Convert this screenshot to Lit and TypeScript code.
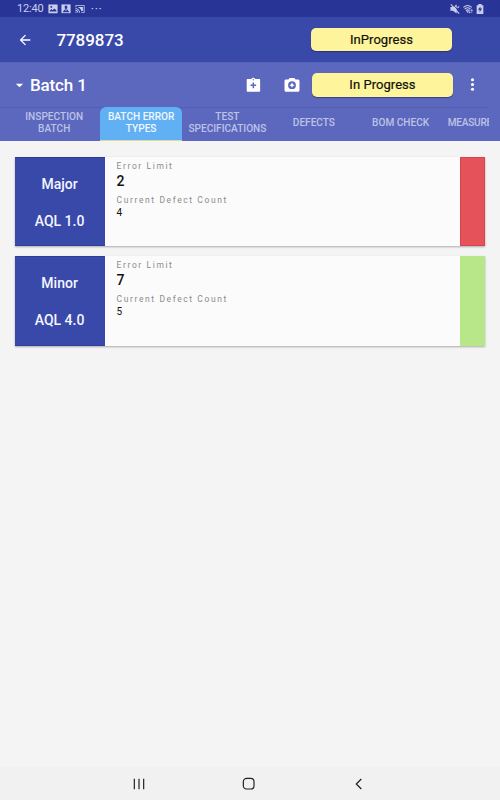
import { LitElement, html, css, svg } from "lit";
import { customElement, property } from "lit/decorators.js";
import { classMap } from "lit/directives/class-map.js";

const ICONS: Record<string, unknown> = {
  back: svg`<path d="M20 11H7.830l5.590-5.590L12 4l-8 8 8 8 1.410-1.410L7.830 13H20z"/>`,
  caret: svg`<path d="M4 8h16L12 15.800z"/>`,
  image: svg`<path fill-rule="evenodd" d="M1 1h22v21H1zM4 18h16v-3l-5-4-4 4-3-3-4 4zM6 5v4h4V5z"/>`,
  user: svg`<path d="M1 1h22v21H1z"/><path d="M9 4h6v7H9zM10.500 10h3v4h-3zM4 20l4-6h8l4 6z" fill="#293596"/><path d="M10 14h4l-2 4z"/>`,
  cast: svg`<path d="M1 3h22v18h-8v-2h6V5H3v3H1zM1 18c2 0 3 1 3 3H1zM1 14c4 0 7 3 7 7H6c0-3-2-5-5-5zM1 10c6 0 11 5 11 11h-2c0-5-4-9-9-9zM7 7h12v10h-4C14 12 11 9 7 8z"/>`,
  mute: svg`<path d="M1 7v9h6l9 7V1L7 7z"/><path d="M6 1 24 19" fill="none" stroke="#293596" stroke-width="2"/><path d="M2 1 22 23M18 9l4-3" fill="none" stroke="currentColor" stroke-width="2.500"/>`,
  wifi: svg`<path d="M1 8Q11-1 21 8M4 12q7-6 14 0M7 16q4-4 8 0" fill="none" stroke="currentColor" stroke-width="2.500"/><path d="M9 18h4l-2 3zM16 13v8m-2-2 2 3 2-3m3 3v-8m-2 2 2-3 2 3" stroke="currentColor" stroke-width="1.300"/>`,
  battery: svg`<path fill-rule="evenodd" d="M8 0h8v3h4v21H4V3h4zM13 6l-6 8h4v6l6-9h-4z"/>`,
  clipboard: svg`<path fill-rule="evenodd" d="M21 3h-6.180C14.400 1.840 13.300 1 12 1s-2.400.84-2.820 2H3.500C3 3 2.500 3.500 2.500 4v16.500c0 .5.500 1 1 1H21c.500 0 1-.5 1-1V4c0-.5-.5-1-1-1zm-9 0c.55 0 1 .45 1 1s-.45 1-1 1-1-.45-1-1 .45-1 1-1zm-1 5h2.200v3h3v2.200h-3v3H11v-3H8V11h3z"/>`,
  camera: svg`<path fill-rule="evenodd" d="M9 2.500 7.170 4.500H4c-1.100 0-2 .9-2 2V19c0 1.100.9 2 2 2h16c1.100 0 2-.9 2-2V6.500c0-1.100-.9-2-2-2h-3.170L15 2.500zm3 4.500a5.200 5.200 0 1 1 0 10.400A5.200 5.200 0 0 1 12 7z"/><path d="m12 8.700 1.200 2.300 2.300 1.200-2.300 1.200-1.200 2.300-1.200-2.300-2.300-1.200 2.300-1.200z"/>`,
  more: svg`<circle cx="12" cy="5.300" r="2.200"/><circle cx="12" cy="12" r="2.200"/><circle cx="12" cy="18.700" r="2.200"/>`,
  recents: svg`<path d="M5 4v16M12 4v16M19 4v16" fill="none" stroke="currentColor" stroke-width="1.800"/>`,
  home: svg`<rect x="3.500" y="3.500" width="16" height="16" rx="5" fill="none" stroke="currentColor" stroke-width="1.800"/>`,
  navback: svg`<path d="M15.500 4.500 8 12l7.500 7.500" fill="none" stroke="currentColor" stroke-width="1.900"/>`,
};

@customElement("ui-icon")
class UiIcon extends LitElement {
  @property() name = "";
  static styles = css`
    :host { display: block; flex: none; width: 16px; height: 16px; }
    svg { display: block; width: 100%; height: 100%; fill: currentColor; }
  `;
  render() {
    return html`<svg viewBox="0 0 24 24">${ICONS[this.name]}</svg>`;
  }
}

@customElement("error-card")
class ErrorCard extends LitElement {
  @property() kind = "";
  @property() aql = "";
  @property() limit = "";
  @property() count = "";
  @property({ type: Boolean }) failed = false;
  static styles = css`
    :host {
      display: grid; grid-template-columns: 90px 1fr 25px; height: 89.500px;
      background: #fbfbfb; box-shadow: 0 1px 2px #0000004d;
    }
    .kind {
      display: flex; flex-direction: column; align-items: center; box-sizing: border-box;
      padding-top: 17px; gap: 19px; background: #3849aa; color: #f4f5ff;
      font-size: 14px; line-height: 18px; font-weight: 500;
      border-bottom: 1px solid #2c3c9f; border-top: 1px solid #2c3c9f;
    }
    .info { padding: 3px 12px; color: #111; }
    .label { font-size: 8.500px; line-height: 12px; letter-spacing: 1.600px; color: #8b8b8b; }
    .limit { font-size: 14px; line-height: 18px; font-weight: 500; margin-bottom: 4px; }
    .count { font-size: 10px; line-height: 14px; }
    .flag { background: #b8e78a; }
    .failed { background: #e55259; box-shadow: inset 0 0 0 1px #d8434d; }
  `;
  render() {
    return html`
      <div class="kind"><span>${this.kind}</span><span>${this.aql}</span></div>
      <div class="info">
        <div class="label">Error Limit</div>
        <div class="limit">${this.limit}</div>
        <div class="label">Current Defect Count</div>
        <div class="count">${this.count}</div>
      </div>
      <div class=${classMap({ flag: true, failed: this.failed })}></div>
    `;
  }
}

@customElement("app-root")
class AppRoot extends LitElement {
  static styles = css`
    :host {
      display: grid; grid-template-rows: 17px 45px 45px 33.500px 1fr 33px;
      width: 500px; height: 800px; overflow: hidden; background: #f4f4f4;
      font-family: Roboto, sans-serif;
    }
    .status, .bar, .nav { display: flex; align-items: center; box-sizing: border-box; }
    .status { background: #293596; color: #c9ceee; padding: 0 15px 0 17px; font-size: 11px; }
    .time { width: 30.500px; line-height: 17px; letter-spacing: -0.200px; }
    .status ui-icon { width: 10px; height: 10px; }
    .status .left { margin-right: 3.500px; }
    .dots { margin-left: 3px; letter-spacing: 1.200px; line-height: 10px; font-size: 9px; font-weight: 700; }
    .right { display: flex; gap: 2.500px; margin-left: auto; }
    .bar { color: #fff; font-weight: 500; }
    .app { background: #3849aa; padding-left: 17.400px; }
    .batch { background: #5c68bd; padding-left: 14px; border-top: 1px solid #5763b8; }
    .order { width: 255px; margin-left: 23px; font-size: 17px; letter-spacing: -0.050px; }
    .caret { width: 11px; height: 11px; }
    .name { width: 214.500px; margin-left: 5px; font-size: 17px; letter-spacing: -0.150px; }
    .clip { width: 16.500px; height: 16.500px; }
    .cam { width: 18px; height: 18px; margin-left: 22.300px; }
    .pill {
      width: 141px; height: 23.500px; border-radius: 5px; background: #fef49c; color: #11110b;
      box-shadow: 0 1px 1px #1c276699; text-align: center; font-size: 13px; line-height: 24px;
      font-weight: 400; letter-spacing: 0.050px; -webkit-text-stroke: 0.200px #11110b;
    }
    .app .pill { margin-left: -0.400px; }
    .batch .pill { margin-left: 10.700px; }
    .menu { margin-left: 11px; width: 17px; height: 17px; margin-bottom: 1px; }
    .tabs {
      display: grid; grid-template-columns: 92.400px 81.500px 91px 82px 91.500px 42.600px; padding-left: 8px;
      width: 481px; background: #5c68bd; box-shadow: 20px 0 #5c68bd, inset 0 1px #525eb3;
      color: #bdc3e8; font-size: 10.100px; line-height: 12px; font-weight: 500;
    }
    .tab {
      display: flex; align-items: center; justify-content: center; text-align: center;
      white-space: pre-line; box-sizing: border-box; padding-bottom: 2px;
    }
    .tab:last-child { justify-content: flex-start; overflow: hidden; padding-left: 1.400px; letter-spacing: -0.250px; }
    .active {
      background: #62b0f4; color: #f0f8ff; border-radius: 6px 6px 0 0;
      border-bottom: 1.500px solid #d9dc98; padding-bottom: 0.500px;
    }
    .list { display: flex; flex-direction: column; gap: 10px; padding: 16.100px 14.600px 0 14.600px; }
    .nav { background: #f1f1f1; color: #222; padding-left: 130.500px; gap: 94px; }
  `;
  render() {
    const tabs = ["INSPECTION\nBATCH", "BATCH ERROR\nTYPES", "TEST\nSPECIFICATIONS", "DEFECTS", "BOM CHECK", "MEASUREMENTS"];
    return html`
      <div class="status">
        <span class="time">12:40</span>
        <ui-icon class="left" name="image"></ui-icon>
        <ui-icon class="left" name="user"></ui-icon>
        <ui-icon class="left" name="cast"></ui-icon>
        <span class="dots">···</span>
        <div class="right">
          <ui-icon name="mute"></ui-icon><ui-icon name="wifi"></ui-icon><ui-icon name="battery"></ui-icon>
        </div>
      </div>
      <div class="bar app">
        <ui-icon name="back"></ui-icon>
        <span class="order">7789873</span>
        <div class="pill">InProgress</div>
      </div>
      <div class="bar batch">
        <ui-icon class="caret" name="caret"></ui-icon>
        <span class="name">Batch 1</span>
        <ui-icon class="clip" name="clipboard"></ui-icon>
        <ui-icon class="cam" name="camera"></ui-icon>
        <div class="pill">In Progress</div>
        <ui-icon class="menu" name="more"></ui-icon>
      </div>
      <div class="tabs">
        ${tabs.map((t, i) => html`<div class=${classMap({ tab: true, active: i === 1 })}>${t}</div>`)}
      </div>
      <div class="list">
        <error-card kind="Major" aql="AQL 1.0" limit="2" count="4" failed></error-card>
        <error-card kind="Minor" aql="AQL 4.0" limit="7" count="5"></error-card>
      </div>
      <div class="nav">
        <ui-icon name="recents"></ui-icon><ui-icon name="home"></ui-icon><ui-icon name="navback"></ui-icon>
      </div>
    `;
  }
}
